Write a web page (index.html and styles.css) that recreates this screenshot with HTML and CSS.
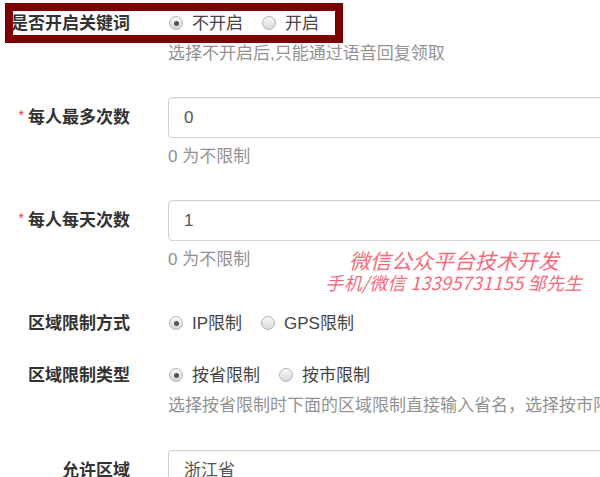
FILE: index.html
```html
<!DOCTYPE html>
<html lang="zh-CN">
<head>
<meta charset="utf-8">
<title>表单</title>
<link rel="stylesheet" href="styles.css">
</head>
<body>
<div class="form">
  <div class="group group-key">
    <div class="label">是否开启关键词</div>
    <div class="control radios">
      <span class="option"><span class="radio checked"></span>不开启</span>
      <span class="option"><span class="radio"></span>开启</span>
    </div>
    <div class="hint">选择不开启后,只能通过语音回复领取</div>
  </div>

  <div class="group group-input g2">
    <div class="label"><span class="req">*</span>每人最多次数</div>
    <div class="control"><div class="input">0</div></div>
    <div class="hint">0 为不限制</div>
  </div>

  <div class="group group-input g3">
    <div class="label"><span class="req">*</span>每人每天次数</div>
    <div class="control"><div class="input">1</div></div>
    <div class="hint">0 为不限制</div>
  </div>

  <div class="group g4">
    <div class="label">区域限制方式</div>
    <div class="control radios">
      <span class="option"><span class="radio checked"></span>IP限制</span>
      <span class="option"><span class="radio"></span>GPS限制</span>
    </div>
  </div>

  <div class="group g5">
    <div class="label">区域限制类型</div>
    <div class="control radios">
      <span class="option"><span class="radio checked"></span>按省限制</span>
      <span class="option"><span class="radio"></span>按市限制</span>
    </div>
    <div class="hint">选择按省限制时下面的区域限制直接输入省名，选择按市限制时下面的区域限制直接输入市名</div>
  </div>

  <div class="group group-input g6">
    <div class="label">允许区域</div>
    <div class="control"><div class="input">浙江省</div></div>
  </div>

  <div class="watermark">
    <div class="wm-title">微信公众平台技术开发</div>
    <div class="wm-contact">手机/微信 13395731155 邹先生</div>
  </div>
</div>
</body>
</html>
```

FILE: styles.css
```css
*, *::before, *::after { box-sizing: border-box; }

html, body {
  margin: 0;
  padding: 0;
  background: #fff;
  overflow: hidden;
}

body {
  width: 600px;
  height: 477px;
  font-family: "Liberation Sans", "Noto Sans CJK SC", sans-serif;
  font-size: 17px;
  color: #333;
}

.form {
  position: relative;
  padding-top: 12px;
}

.group {
  display: grid;
  grid-template-columns: 130px 560px;
  column-gap: 38px;
  align-items: start;
}

.label {
  text-align: right;
  font-weight: bold;
  color: #333;
  line-height: 24px;
  height: 24px;
  white-space: nowrap;
}

.group-input .label {
  line-height: 41px;
  height: 41px;
}

.req {
  color: #e4393c;
  font-size: 14px;
  font-weight: normal;
  margin-right: 4px;
  position: relative;
  top: -3px;
}

.control {
  grid-column: 2;
  grid-row: 1;
}

.hint {
  grid-column: 2;
  grid-row: 2;
  color: #929292;
  line-height: 24px;
  height: 24px;
  margin-top: 6px;
  white-space: nowrap;
}

.group-input .hint {
  margin-top: 7px;
}

.radios {
  display: flex;
  align-items: baseline;
  height: 24px;
  line-height: 24px;
  color: #444;
  white-space: nowrap;
}

.option {
  display: inline-block;
  margin-right: 18px;
}

.radio {
  display: inline-block;
  width: 14px;
  height: 14px;
  margin-left: 1px;
  margin-right: 9px;
  border-radius: 50%;
  border: 1px solid #b4b4b4;
  background: linear-gradient(#f8f8f8, #d8d8d8);
  position: relative;
  vertical-align: -1px;
}

.radio.checked::after {
  content: "";
  position: absolute;
  left: 3.5px;
  top: 3.5px;
  width: 5px;
  height: 5px;
  border-radius: 50%;
  background: #555;
}

.input {
  height: 41px;
  width: 450px;
  border: 1px solid #d2d2d2;
  border-radius: 4px;
  padding-left: 15px;
  line-height: 39px;
  color: #555;
  box-shadow: inset 0 1px 1px rgba(0, 0, 0, 0.05);
}

/* annotation box around first row */
.group-key {
  position: relative;
}

.group-key::after {
  content: "";
  position: absolute;
  left: 5px;
  top: -9px;
  width: 338px;
  height: 40px;
  border: 8px solid #7d0000;
  pointer-events: none;
}

.g2 { margin-top: 31px; }
.g3 { margin-top: 31px; }
.g4 { margin-top: 40px; }
.g5 { margin-top: 28px; }
.g6 { margin-top: 32px; }

.watermark {
  position: absolute;
  left: 318px;
  top: 248px;
  width: 272px;
  text-align: center;
  color: #f66b7b;
  font-style: italic;
  font-family: "Noto Sans CJK SC", sans-serif;
}

.wm-title {
  font-size: 21px;
  line-height: 24px;
}

.wm-contact {
  font-size: 18px;
  line-height: 20px;
  letter-spacing: 0.3px;
}
```
